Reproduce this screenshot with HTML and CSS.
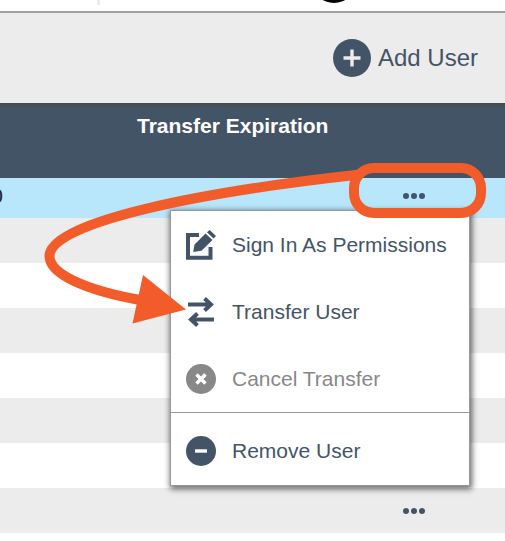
FILE: index.html
```html
<!DOCTYPE html>
<html lang="en">
<head>
  <meta charset="UTF-8" />
  <title>Users</title>
  <link rel="stylesheet" href="styles.css">
</head>
<body>

  <header class="topbar">
    <span class="divider"></span>
    <svg class="avatar" width="44" height="3" viewBox="0 41 44 3"><circle cx="22" cy="22" r="22" /></svg>
  </header>

  <div class="toolbar">
    <button class="add-user">
      <svg width="38" height="38" viewBox="0 0 38 38">
        <circle cx="19" cy="19" r="19" fill="#445467" />
        <path d="M19 10.5v17M10.5 19h17" stroke="#ececec" stroke-width="3.4" />
      </svg>
      Add User
    </button>
  </div>

  <main class="users">
    <table>
      <thead>
        <tr>
          <th></th>
          <th class="expiration">Transfer Expiration</th>
          <th class="actions"></th>
        </tr>
      </thead>
      <tbody>
        <tr class="active">
          <td><span class="clipped">0</span></td>
          <td></td>
          <td class="actions">
            <button class="dots" aria-label="User actions"><i></i><i></i><i></i></button>
            <div class="menu">
              <button>
                <svg width="30" height="30" viewBox="0 0 30 30">
                  <path d="M13 5H2v22.700h22.500V17" fill="none" stroke="#445467" stroke-width="4" />
                  <path d="M7.200 22L8.500 14.500L19.500 3.500L26.500 10L15.500 20.700Z M21 2.200L23.700 0L30 6L27.500 8.500Z" fill="#445467" />
                </svg>
                Sign In As Permissions
              </button>
              <button>
                <svg width="30" height="30" viewBox="0 0 30 30" fill="none" stroke="#445467" stroke-width="4">
                  <path d="M2 7.500h23M18.500 1.500L25 7.500L18.500 13.500M28 22.500H5M11.500 16.500L5 22.500L11.500 28.500" />
                </svg>
                Transfer User
              </button>
              <button disabled>
                <svg width="30" height="30" viewBox="0 0 30 30">
                  <circle cx="15" cy="15" r="15" fill="#888" />
                  <path d="M10.500 10.500l9 9M19.500 10.500l-9 9" stroke="#fff" stroke-width="3.400" />
                </svg>
                Cancel Transfer
              </button>
              <button class="remove">
                <svg width="30" height="30" viewBox="0 0 30 30">
                  <circle cx="15" cy="15" r="15" fill="#445467" />
                  <path d="M9 15h12" stroke="#fff" stroke-width="3.400" />
                </svg>
                Remove User
              </button>
            </div>
          </td>
        </tr>
        <tr><td></td><td></td><td></td></tr>
        <tr><td></td><td></td><td></td></tr>
        <tr><td></td><td></td><td></td></tr>
        <tr><td></td><td></td><td></td></tr>
        <tr><td></td><td></td><td></td></tr>
        <tr><td></td><td></td><td></td></tr>
        <tr>
          <td></td>
          <td></td>
          <td class="actions">
            <button class="dots" aria-label="User actions"><i></i><i></i><i></i></button>
          </td>
        </tr>
      </tbody>
    </table>

    <!-- callout from the row actions to Transfer User -->
    <svg class="callout" width="505" height="240" viewBox="0 103 505 240">
      <g fill="none" stroke="#f25c2a" stroke-width="10">
        <path d="M360 174.500C200 192 49.500 222 49.500 256C49.500 274 85 290 140 300" />
        <rect x="354" y="168" width="127" height="45" rx="20" />
      </g>
      <path d="M143 275L186 309.500L132.500 323.500Z" fill="#f25c2a" />
    </svg>
  </main>

</body>
</html>
```

FILE: styles.css
```css
body {
  margin: 0;
  background-color: white;
  color: #445467;
  font-family: "Liberation Sans", Arial, sans-serif;
  font-size: 21px;
}

button {
  border: none;
  background: none;
  color: inherit;
  font: inherit;
  cursor: pointer;
}

.topbar {
  display: flex;
  align-items: flex-start;
  justify-content: space-between;
  height: 11px;
  padding: 0 149px 0 97px;
  border-bottom: 2px solid #a0a0a0;
}

.divider {
  width: 3px;
  height: 5px;
  background-color: #ececec;
}

.toolbar {
  display: flex;
  align-items: center;
  justify-content: flex-end;
  height: 90px;
  padding-right: 27px;
  background-color: #ececec;
}

.add-user {
  display: flex;
  align-items: center;
  gap: 7px;
  padding: 0;
  font-size: 24px;
}

.users {
  position: relative;
}

table {
  width: 100%;
  table-layout: fixed;
  border-collapse: collapse;
}

th {
  height: 75px;
  box-sizing: border-box;
  padding: 11px 0 0;
  background: linear-gradient(#484848, #445467 5px);
  color: white;
  line-height: 24px;
  text-align: left;
  vertical-align: top;
  white-space: nowrap;
}

th.expiration {
  width: 191px;
}

th.actions {
  width: 177px;
}

td {
  height: 45px;
  padding: 0;
}

tbody tr:nth-child(even) {
  background-color: #ececec;
}

tbody .active {
  background-color: #b8e6fb;
}

.active td {
  height: 36px;
  padding-bottom: 4px;
}

.clipped {
  display: flex;
  justify-content: flex-end;
  width: 3px;
  overflow: hidden;
  color: #222;
}

td.actions {
  position: relative;
}

.dots {
  display: flex;
  gap: 2px;
  margin-left: 67px;
  padding: 8px;
}

.dots i {
  width: 6px;
  height: 6px;
  border-radius: 50%;
  background-color: #445467;
}

.menu {
  position: absolute;
  top: 32px;
  right: 35px;
  width: 298px;
  border: 1px solid #999;
  background-color: white;
  box-shadow: 1px 2px 6px 1px rgba(0, 0, 0, 0.6);
}

.menu button {
  display: flex;
  align-items: center;
  gap: 16px;
  width: 100%;
  height: 67px;
  padding: 0 15px;
  white-space: nowrap;
}

.menu button:disabled {
  color: #888;
  cursor: default;
}

.menu .remove {
  height: 73px;
  padding-top: 3px;
  border-top: 1px solid #999;
}

.callout {
  position: absolute;
  top: 0;
  right: 0;
  pointer-events: none;
}
```
